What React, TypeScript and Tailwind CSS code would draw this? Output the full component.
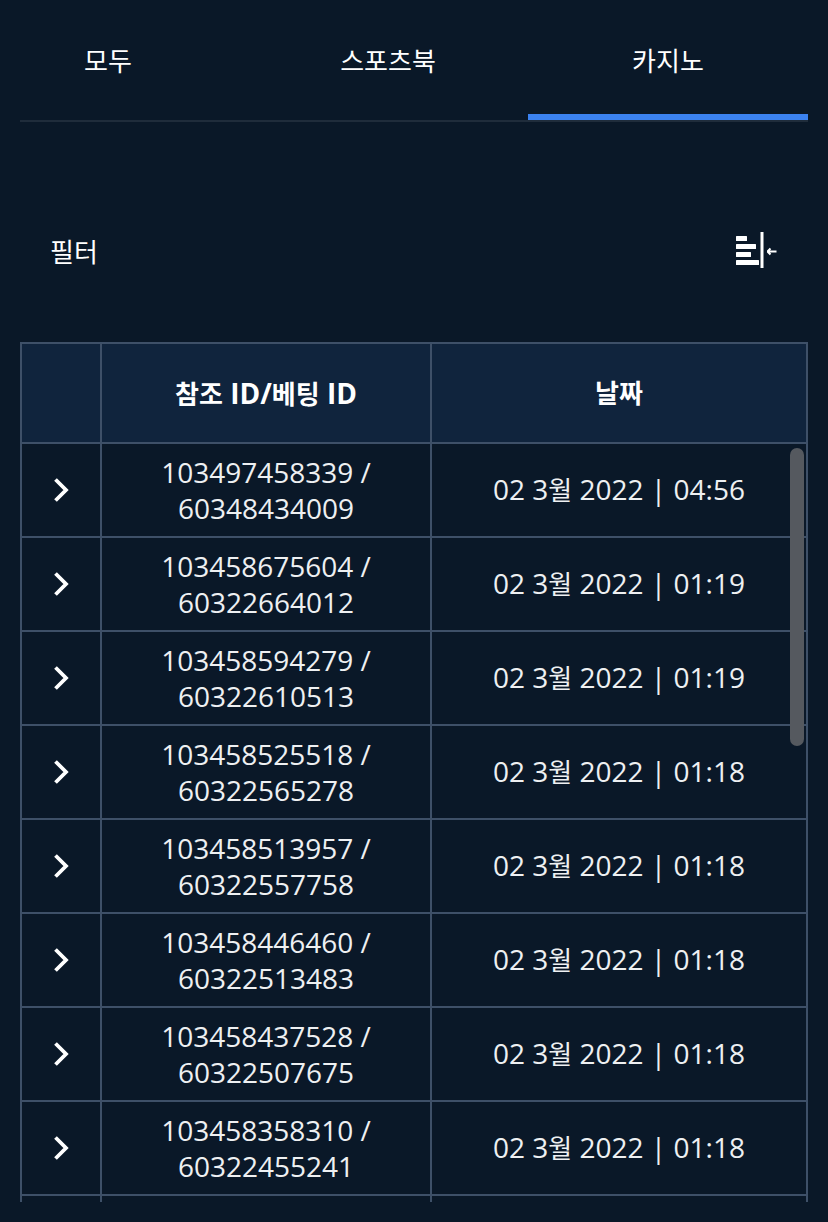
const rows = [
  ['103497458339', '60348434009', '04:56'],
  ['103458675604', '60322664012', '01:19'],
  ['103458594279', '60322610513', '01:19'],
  ['103458525518', '60322565278', '01:18'],
  ['103458513957', '60322557758', '01:18'],
  ['103458446460', '60322513483', '01:18'],
  ['103458437528', '60322507675', '01:18'],
  ['103458358310', '60322455241', '01:18'],
]

function Chevron() {
  return (
    <svg width="16" height="26" viewBox="0 0 16 26" fill="none">
      <path d="M2.5 2.5 L13 13 L2.5 23.5" stroke="white" strokeWidth="3.8" />
    </svg>
  )
}

function CollapseIcon() {
  return (
    <svg className="mb-1" width="42" height="36" viewBox="0 0 42 36" fill="none">
      <rect x="0" y="4" width="11" height="5" rx="0.5" fill="white" />
      <rect x="0" y="12" width="20" height="5" rx="0.5" fill="white" />
      <rect x="0" y="20" width="15" height="5" rx="0.5" fill="white" />
      <rect x="0" y="28" width="23" height="5" rx="0.5" fill="white" />
      <rect x="24.5" y="0" width="3" height="36" fill="white" />
      <path d="M31 19.5 H40.5 M31.5 19.5 L34.5 16.5 M31.5 19.5 L34.5 22.5" stroke="white" strokeWidth="2" />
    </svg>
  )
}

const tabClass = 'flex h-[120px] w-[280px] shrink-0 items-center justify-center border-b-[6px] pt-2 text-[26px]'

export default function App() {
  return (
    <div className="h-[1222px] w-[828px] overflow-hidden bg-[#0a1828] px-5 text-white font-['Open_Sans','Noto_Sans_CJK_KR',sans-serif]">
      <div className="flex h-[122px] justify-end overflow-hidden border-b-2 border-[#1f2c3b]">
        <div className={tabClass + ' border-transparent'}>모두</div>
        <div className={tabClass + ' border-transparent'}>스포츠북</div>
        <div className={tabClass + ' border-[#3b82f0]'}>카지노</div>
      </div>

      <div className="flex h-[220px] items-center justify-between px-[30px] pt-10">
        <span className="text-[26px]">필터</span>
        <CollapseIcon />
      </div>

      <div className="relative h-[860px] overflow-hidden border-x-2 border-t-2 border-[#3e5068]">
        <div className="grid h-[100px] grid-cols-[80px_330px_1fr] border-b-2 border-[#3e5068] bg-[#10243d] text-[28px] font-bold">
          <div className="border-r-2 border-[#3e5068]" />
          <div className="flex items-center justify-center border-r-2 border-[#3e5068]">
            <span><span className="text-[26px]">참조</span> ID/<span className="text-[26px]">베팅</span> ID</span>
          </div>
          <div className="flex items-center justify-center text-[26px]">날짜</div>
        </div>
        {rows.map((r) => (
          <div key={r[0]} className="grid h-[94px] grid-cols-[80px_330px_1fr] border-b-2 border-[#3e5068] text-[28px] leading-9 text-[#eef0f2]">
            <div className="flex items-center justify-center border-r-2 border-[#3e5068]">
              <Chevron />
            </div>
            <div className="flex flex-col items-center justify-center border-r-2 border-[#3e5068]">
              <span>{r[0]} /</span>
              <span>{r[1]}</span>
            </div>
            <div className="flex items-center justify-center whitespace-nowrap pb-0.5">
              <span>02 3<span className="text-[26px]">월</span> 2022 | {r[2]}</span>
            </div>
          </div>
        ))}
        <div className="grid h-[20px] grid-cols-[80px_330px_1fr]">
          <div className="border-r-2 border-[#3e5068]" />
          <div className="border-r-2 border-[#3e5068]" />
        </div>
        <div className="absolute right-0.5 top-[104px] h-[298px] w-3.5 rounded-full bg-[#55595f]" />
      </div>
    </div>
  )
}
